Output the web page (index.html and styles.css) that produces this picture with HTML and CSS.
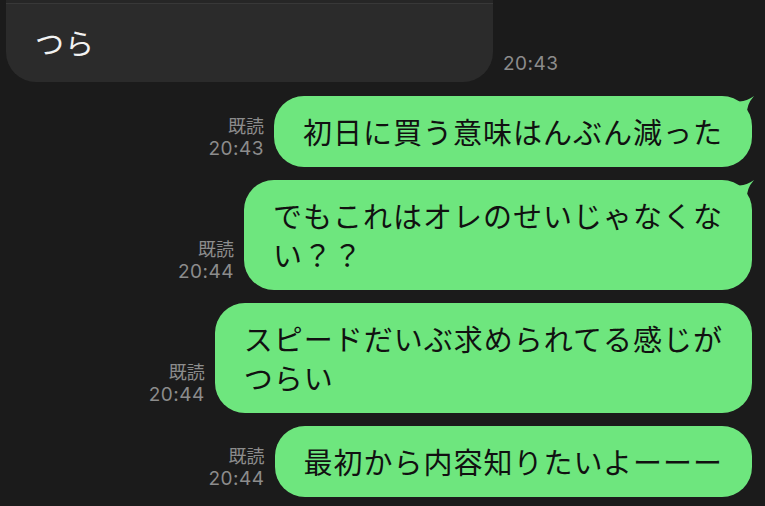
FILE: index.html
```html
<!DOCTYPE html>
<html lang="ja">
  <head>
    <meta charset="UTF-8" />
    <meta name="viewport" content="width=device-width, initial-scale=1.0" />
    <link rel="stylesheet" href="styles.css">
    <title>トーク</title>
  </head>
  <body>
    <div class="chat">
      <div class="row row-in">
        <div class="bubble bubble-in">
          <div class="bubble-top"></div>
          <div class="text">つら</div>
        </div>
        <div class="meta">
          <div class="time">20:43</div>
        </div>
      </div>

      <div class="row row-out">
        <div class="meta">
          <div class="read">既読</div>
          <div class="time">20:43</div>
        </div>
        <div class="bubble bubble-out">
          <svg class="tail" width="26" height="24" viewBox="0 0 26 24">
            <path d="M1,4 Q13,10 25,1 Q17,10 18,20 L1,20 Z" />
          </svg>
          <div class="text">初日に買う意味はんぶん減った</div>
        </div>
      </div>

      <div class="row row-out">
        <div class="meta">
          <div class="read">既読</div>
          <div class="time">20:44</div>
        </div>
        <div class="bubble bubble-out">
          <svg class="tail" width="26" height="24" viewBox="0 0 26 24">
            <path d="M1,4 Q13,10 25,1 Q17,10 18,20 L1,20 Z" />
          </svg>
          <div class="text">でもこれはオレのせいじゃなくな<br>い？？</div>
        </div>
      </div>

      <div class="row row-out">
        <div class="meta">
          <div class="read">既読</div>
          <div class="time">20:44</div>
        </div>
        <div class="bubble bubble-out">
          <div class="text">スピードだいぶ求められてる感じが<br>つらい</div>
        </div>
      </div>

      <div class="row row-out">
        <div class="meta">
          <div class="read">既読</div>
          <div class="time">20:44</div>
        </div>
        <div class="bubble bubble-out">
          <div class="text">最初から内容知りたいよーーー</div>
        </div>
      </div>
    </div>
  </body>
</html>
```

FILE: styles.css
```css
html {
  font-family: "Noto Sans CJK JP", "Noto Sans", sans-serif;
  -webkit-font-smoothing: antialiased;
  color: #111111;
}
body {
  margin: 0;
  padding: 0;
  background: #1b1b1b;
  width: 765px;
  height: 506px;
  overflow: hidden;
}
.chat {
  display: flex;
  flex-direction: column;
  padding: 0 13px 0 6px;
}
.row {
  display: flex;
  align-items: flex-end;
  gap: 10px;
  margin-top: 13px;
}
.row-in {
  margin-top: 0;
}
.row-in + .row-out {
  margin-top: 14px;
}
.row-out {
  justify-content: flex-end;
}
.bubble {
  position: relative;
  border-radius: 30px;
}
.bubble .text {
  font-size: 29px;
  letter-spacing: 1px;
  line-height: 39px;
  white-space: nowrap;
}
.bubble-in {
  width: 487px;
  background: #2b2b2b;
  border-radius: 0 0 30px 30px;
  color: #f2f2f2;
}
.bubble-in .bubble-top {
  height: 3px;
  background: #262626;
  border-bottom: 1px solid #383838;
}
.bubble-in .text {
  padding: 19px 29px 20px;
}
.bubble-out {
  background: #6ee67e;
  padding: 16px 29px 16px 29px;
}
.tail {
  position: absolute;
  top: -1px;
  right: -3px;
  fill: #6ee67e;
}
.meta {
  margin-bottom: 7px;
  text-align: right;
  color: #8c8c8c;
  font-size: 18px;
  line-height: 23px;
}
.meta .time {
  font-family: Inter, Roboto, sans-serif;
  font-size: 19px;
  letter-spacing: 0.5px;
}
```
